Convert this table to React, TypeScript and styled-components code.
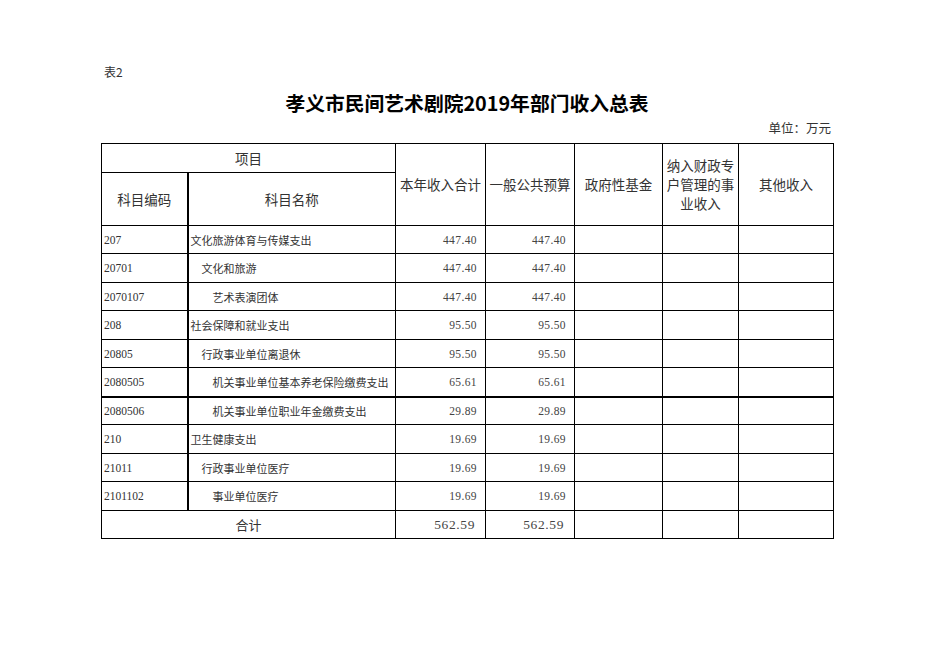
import React from "react";
import styled, { createGlobalStyle } from "styled-components";

const GlobalStyle = createGlobalStyle`
  html, body {
    margin: 0;
    padding: 0;
    background: #fff;
  }
  body {
    font-family: "Noto Sans CJK SC", "Liberation Serif", serif;
    color: #222;
  }
`;

const Page = styled.div`
  width: 936px;
  height: 662px;
  padding: 63px 0 0 101px;
  box-sizing: border-box;
`;

const Sheet = styled.div`
  width: 732px;
  display: flex;
  flex-direction: column;
`;

const Note = styled.div`
  height: 18px;
  line-height: 18px;
  font-size: 12px;
  padding-left: 3px;
  color: #333;
`;

const Title = styled.h1`
  margin: 8px 0 0;
  height: 28px;
  line-height: 28px;
  font-size: 19.8px;
  font-weight: 700;
  text-align: center;
  color: #000;
`;

const Unit = styled.div`
  height: 20px;
  line-height: 20px;
  margin-top: 1px;
  font-size: 12.5px;
  text-align: right;
  padding-right: 2px;
  color: #333;
`;

const Table = styled.table`
  margin-top: 5px;
  width: 732px;
  table-layout: fixed;
  border-collapse: collapse;
  font-size: 11px;
`;

const HeadCell = styled.td<{ $thick?: boolean }>`
  border: 1px solid #000;
  border-left-width: ${(p) => (p.$thick ? "2px" : "1px")};
  text-align: center;
  vertical-align: middle;
  font-size: 13.5px;
  line-height: 19px;
  padding: 0;
  color: #333;
`;

const Row = styled.tr<{ $h: number; $thickTop?: boolean }>`
  height: ${(p) => p.$h}px;
  & > td {
    border-top-width: ${(p) => (p.$thickTop ? "2px" : "1px")};
  }
`;

const CodeCell = styled.td`
  border: 1px solid #000;
  padding: 0 2px;
  font-family: "Liberation Serif", serif;
  font-size: 11.5px;
  color: #333;
  white-space: nowrap;
`;

const NameCell = styled.td<{ $level: number }>`
  border: 1px solid #000;
  border-left-width: 2px;
  padding: 0 0 0 ${(p) => 2 + p.$level * 11}px;
  font-size: 11px;
  color: #333;
  white-space: nowrap;
  overflow: hidden;
`;

const NumCell = styled.td<{ $big?: boolean }>`
  border: 1px solid #000;
  text-align: right;
  padding-right: ${(p) => (p.$big ? "10px" : "8px")};
  font-family: "Liberation Serif", serif;
  font-size: ${(p) => (p.$big ? "13.5px" : "11.5px")};
  font-weight: 400;
  letter-spacing: ${(p) => (p.$big ? "0.6px" : "0.4px")};
  color: #444;
`;

const EmptyCell = styled.td`
  border: 1px solid #000;
`;

const TotalLabel = styled.td`
  border: 1px solid #000;
  text-align: center;
  font-size: 13px;
  color: #333;
`;

type Item = {
  code: string;
  name: string;
  level: number;
  total: string;
  general: string;
};

const items: Item[] = [
  { code: "207", name: "文化旅游体育与传媒支出", level: 0, total: "447.40", general: "447.40" },
  { code: "20701", name: "文化和旅游", level: 1, total: "447.40", general: "447.40" },
  { code: "2070107", name: "艺术表演团体", level: 2, total: "447.40", general: "447.40" },
  { code: "208", name: "社会保障和就业支出", level: 0, total: "95.50", general: "95.50" },
  { code: "20805", name: "行政事业单位离退休", level: 1, total: "95.50", general: "95.50" },
  { code: "2080505", name: "机关事业单位基本养老保险缴费支出", level: 2, total: "65.61", general: "65.61" },
  { code: "2080506", name: "机关事业单位职业年金缴费支出", level: 2, total: "29.89", general: "29.89" },
  { code: "210", name: "卫生健康支出", level: 0, total: "19.69", general: "19.69" },
  { code: "21011", name: "行政事业单位医疗", level: 1, total: "19.69", general: "19.69" },
  { code: "2101102", name: "事业单位医疗", level: 2, total: "19.69", general: "19.69" },
];

const widths = [86, 208, 90, 89, 88, 76, 95];

export default function App() {
  return (
    <Page>
      <GlobalStyle />
      <Sheet>
        <Note>表2</Note>
        <Title>孝义市民间艺术剧院2019年部门收入总表</Title>
        <Unit>单位：万元</Unit>
        <Table>
          <colgroup>
            {widths.map((w, i) => (
              <col key={i} style={{ width: w }} />
            ))}
          </colgroup>
          <tbody>
            <Row $h={29}>
              <HeadCell colSpan={2}>项目</HeadCell>
              <HeadCell rowSpan={2}>本年收入合计</HeadCell>
              <HeadCell rowSpan={2}>一般公共预算</HeadCell>
              <HeadCell rowSpan={2}>政府性基金</HeadCell>
              <HeadCell rowSpan={2}>纳入财政专户管理的事业收入</HeadCell>
              <HeadCell rowSpan={2}>其他收入</HeadCell>
            </Row>
            <Row $h={53}>
              <HeadCell>科目编码</HeadCell>
              <HeadCell $thick>科目名称</HeadCell>
            </Row>
            {items.map((it, i) => (
              <Row key={it.code} $h={i % 2 === 0 ? 28 : 29} $thickTop={it.code === "2080506"}>
                <CodeCell>{it.code}</CodeCell>
                <NameCell $level={it.level}>{it.name}</NameCell>
                <NumCell>{it.total}</NumCell>
                <NumCell>{it.general}</NumCell>
                <EmptyCell />
                <EmptyCell />
                <EmptyCell />
              </Row>
            ))}
            <Row $h={28}>
              <TotalLabel colSpan={2}>合计</TotalLabel>
              <NumCell $big>562.59</NumCell>
              <NumCell $big>562.59</NumCell>
              <EmptyCell />
              <EmptyCell />
              <EmptyCell />
            </Row>
          </tbody>
        </Table>
      </Sheet>
    </Page>
  );
}
